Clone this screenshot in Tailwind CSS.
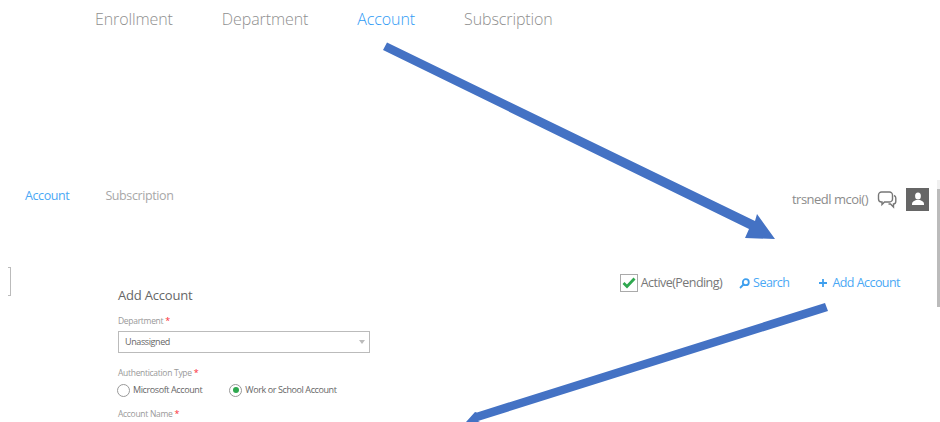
<!DOCTYPE html>
<html lang="en">
<head>
  <meta charset="UTF-8">
  <title>Add Account</title>
  <script src="https://cdn.jsdelivr.net/npm/@tailwindcss/browser@4"></script>
</head>
<body class="bg-white h-[422px] overflow-hidden relative font-['Open_Sans',sans-serif]">

  <!-- Large nav -->
  <nav class="flex gap-[49px] pl-[95px] h-[38px] items-center text-[16px] tracking-[-0.1px] font-light text-[#8f8f8f]">
    <span>Enrollment</span>
    <span>Department</span>
    <span class="text-[#2f9bf5]">Account</span>
    <span>Subscription</span>
  </nav>

  <!-- Second nav -->
  <div class="flex justify-between items-center mt-[148px] pl-[25px] pr-[11px] h-[26px]">
    <div class="flex gap-[36px] mb-[6px] text-[12.5px] tracking-[-0.4px] text-[#a8a8a8]">
      <span class="text-[#4aa8f5]">Account</span>
      <span>Subscription</span>
    </div>
    <div class="flex items-center text-[13px] tracking-[-0.5px] text-[#8c8c8c]">
      <span class="mt-[2px]">trsnedl mcoi()</span>
      <svg class="ml-[9px] mt-[2px] w-[20px] h-[18px]" viewBox="0 0 20 18" fill="none" stroke="#777" stroke-width="1.400">
        <path d="M4.500 1h8a3 3 0 0 1 3 3v4a3 3 0 0 1-3 3h-5l-2.500 2.500v-2.500h-.5a3 3 0 0 1-3-3v-4a3 3 0 0 1 3-3z"/>
        <path d="M17 4.500a2.500 2.500 0 0 1 1.800 2.500v3.500a2.500 2.500 0 0 1-2.300 2.500v3l-3-3h-2"/>
      </svg>
      <div class="ml-[9px] w-[23px] h-[23px] bg-[#666] flex items-center justify-center">
        <svg class="w-[14px] h-[14px]" viewBox="0 0 14 14" fill="#fff">
          <ellipse cx="7" cy="4" rx="2.900" ry="3.500"/>
          <path d="M1 13v-1.500c0-1.500 2-2.500 4-3.500h4c2 1 4 2 4 3.500v1.500z"/>
        </svg>
      </div>
    </div>
  </div>

  <!-- Toolbar -->
  <div class="flex justify-end items-center mt-[59px] pr-[40px] h-[24px] text-[12.5px] tracking-[-0.55px]">
    <span class="w-[18px] h-[18px] border border-[#aaa] flex items-center justify-center mr-[3px]">
      <svg class="w-[14px] h-[12px]" viewBox="0 0 14 12" fill="none" stroke="#2fa84f" stroke-width="2.800"><path d="M1.500 6l3.500 3.500 7.500-8"/></svg>
    </span>
    <span class="text-[#777]">Active(Pending)</span>
    <span class="ml-[17px] flex items-center gap-[3px] text-[#4aa8f5]">
      <svg class="w-[11px] h-[11px]" viewBox="0 0 11 11" fill="none" stroke="#3f9fee" stroke-width="1.800"><circle cx="6.800" cy="4.200" r="3"/><path d="M4.500 6.500l-3.500 3.500"/></svg>
      Search
    </span>
    <span class="ml-[30px] flex items-center gap-[5px] text-[#4aa8f5]">
      <svg class="w-[8px] h-[8px]" viewBox="0 0 9 9" stroke="#3f9fee" stroke-width="2"><path d="M4.500 0v9M0 4.500h9"/></svg>
      Add Account
    </span>
  </div>

  <!-- Form -->
  <form class="ml-[118px] w-[252px] -mt-[9px] text-[#999] text-[8.5px] tracking-[-0.3px]">
    <h2 class="text-[13px] tracking-[-0.2px] text-[#666] leading-[18px]">Add Account</h2>
    <label class="block mt-[10px] leading-[14px]">Department <span class="text-red-500 text-[9px]">*</span></label>
    <div class="mt-[3px] h-[22px] border border-[#bbb] flex items-center justify-between pl-[6px] pr-[4px] text-[9px] tracking-[-0.4px] text-[#666]">
      <span>Unassigned</span>
      <span class="w-0 h-0 border-x-[3px] border-t-[4px] border-x-transparent border-t-[#bbb]"></span>
    </div>
    <label class="block mt-[13px] leading-[14px]">Authentication Type <span class="text-red-500 text-[9px]">*</span></label>
    <div class="flex items-center h-[16px] mt-[2px] -ml-[1px] text-[9px] tracking-[-0.4px] text-[#666]">
      <span class="w-[13px] h-[13px] rounded-full border border-[#999]"></span>
      <span class="ml-[3px]">Microsoft Account</span>
      <span class="ml-[27px] w-[13px] h-[13px] rounded-full border border-[#999] flex items-center justify-center">
        <span class="w-[6px] h-[6px] rounded-full bg-[#2fa84f]"></span>
      </span>
      <span class="ml-[3px]">Work or School Account</span>
    </div>
    <label class="block mt-[9px] leading-[14px]">Account Name <span class="text-red-500 text-[9px]">*</span></label>
  </form>

  <!-- Bracket on the left edge -->
  <div class="absolute left-[8px] top-[267px] w-[3px] h-[29px] border border-l-0 border-[#bbb]"></div>

  <!-- Scrollbar -->
  <div class="absolute right-0 top-[180px] w-[3px] h-[127px] bg-[#f0f0f0]">
    <div class="mt-[9px] h-[118px] bg-[#bbb]"></div>
  </div>

  <!-- Annotation arrows -->
  <svg class="absolute inset-0 w-[940px] h-[422px] pointer-events-none" viewBox="0 0 940 422" fill="#4472c4">
    <path d="M383 50L387 42.500 755 221 757 214 775 239 745 238 749 229z"/>
    <path d="M825 303L828 311 478 421 480 422 466 422 475 412 477 412.500z"/>
  </svg>
</body>
</html>
